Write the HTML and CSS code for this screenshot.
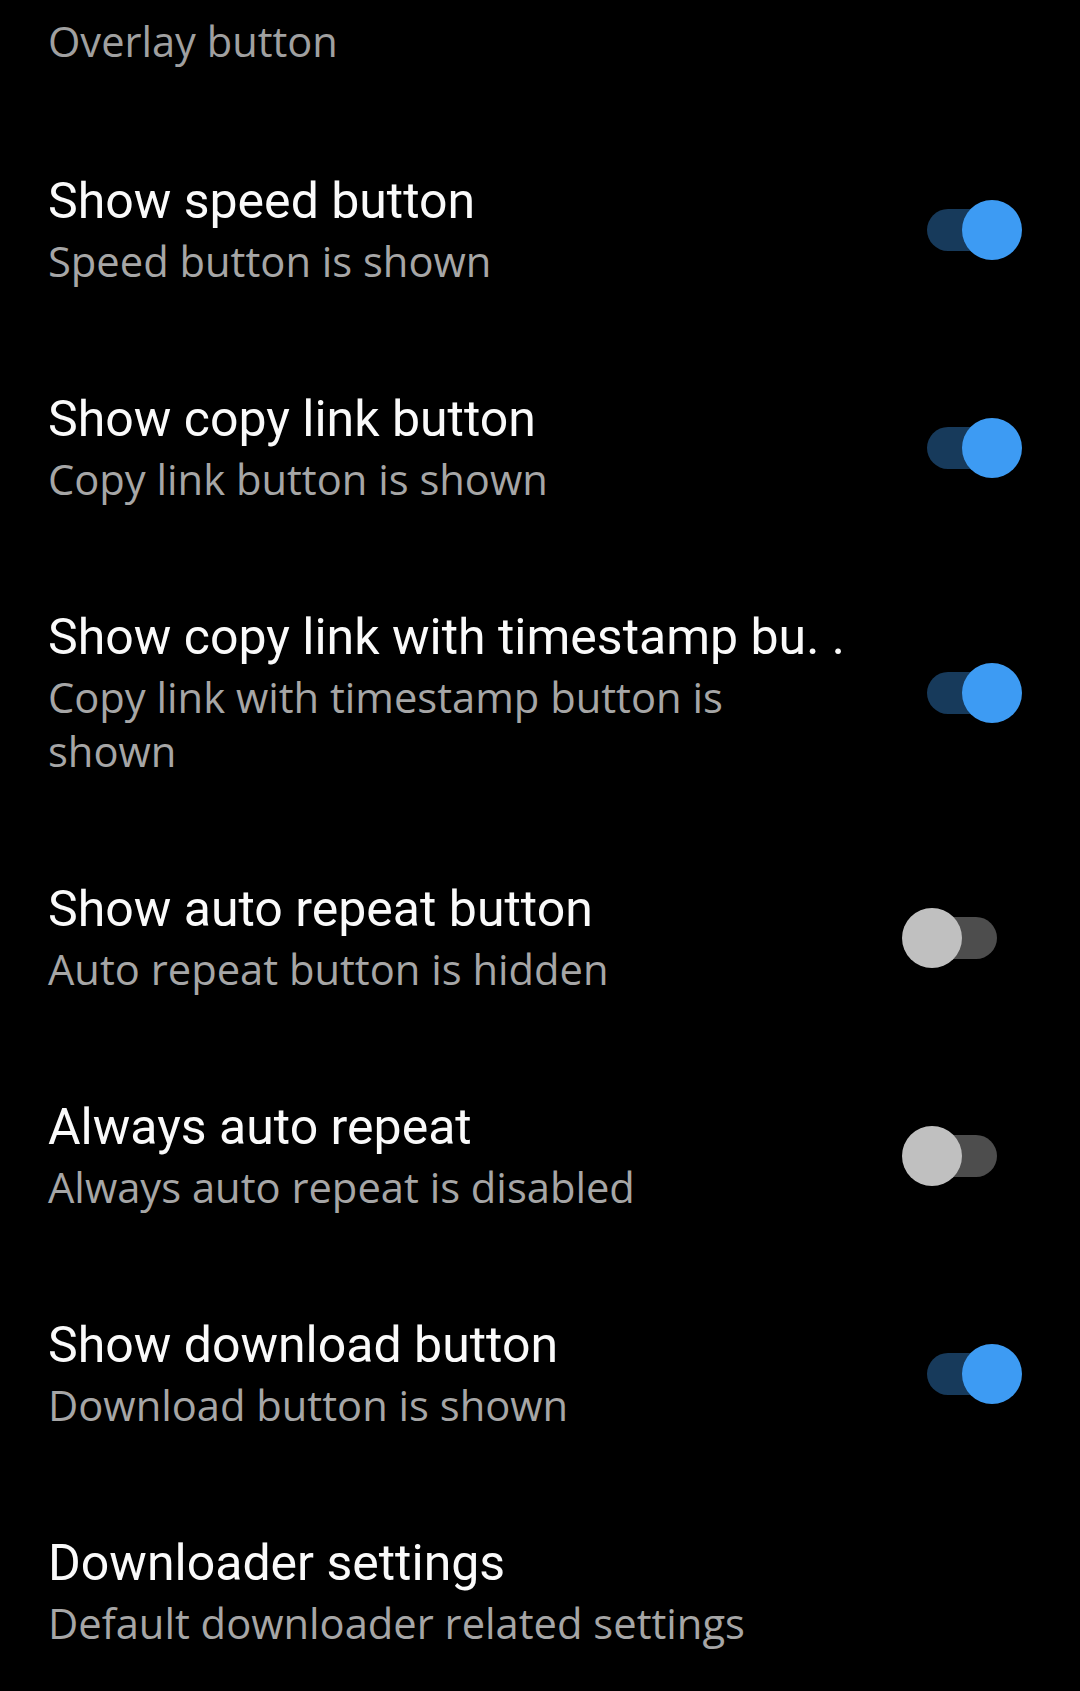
FILE: index.html
```html
<!DOCTYPE html>
<html lang="en">
<head>
<meta charset="utf-8">
<title>Overlay button settings</title>
<link rel="stylesheet" href="styles.css">
</head>
<body>
<main class="screen">
  <h2 class="section-header">Overlay button</h2>
  <ul class="pref-list">
    <li class="pref">
      <div class="pref-text">
        <div class="pref-title">Show speed button</div>
        <div class="pref-summary">Speed button is shown</div>
      </div>
      <span class="switch on"><span class="track"></span><span class="thumb"></span></span>
    </li>
    <li class="pref">
      <div class="pref-text">
        <div class="pref-title">Show copy link button</div>
        <div class="pref-summary">Copy link button is shown</div>
      </div>
      <span class="switch on"><span class="track"></span><span class="thumb"></span></span>
    </li>
    <li class="pref">
      <div class="pref-text">
        <div class="pref-title">Show copy link with timestamp bu. .</div>
        <div class="pref-summary">Copy link with timestamp button is shown</div>
      </div>
      <span class="switch on"><span class="track"></span><span class="thumb"></span></span>
    </li>
    <li class="pref">
      <div class="pref-text">
        <div class="pref-title">Show auto repeat button</div>
        <div class="pref-summary">Auto repeat button is hidden</div>
      </div>
      <span class="switch off"><span class="track"></span><span class="thumb"></span></span>
    </li>
    <li class="pref">
      <div class="pref-text">
        <div class="pref-title">Always auto repeat</div>
        <div class="pref-summary">Always auto repeat is disabled</div>
      </div>
      <span class="switch off"><span class="track"></span><span class="thumb"></span></span>
    </li>
    <li class="pref">
      <div class="pref-text">
        <div class="pref-title">Show download button</div>
        <div class="pref-summary">Download button is shown</div>
      </div>
      <span class="switch on"><span class="track"></span><span class="thumb"></span></span>
    </li>
    <li class="pref">
      <div class="pref-text">
        <div class="pref-title">Downloader settings</div>
        <div class="pref-summary">Default downloader related settings</div>
      </div>
    </li>
  </ul>
</main>
</body>
</html>
```
FILE: styles.css
```css
html, body {
  margin: 0;
  padding: 0;
  background: #000;
}

body {
  font-family: Roboto, "Noto Sans", "Liberation Sans", sans-serif;
  width: 1080px;
  height: 1691px;
  overflow: hidden;
}

.screen {
  display: flex;
  flex-direction: column;
}

.section-header {
  margin: 0;
  padding: 13px 48px 0;
  height: 119px;
  box-sizing: border-box;
  font-family: "Open Sans", "Noto Sans", sans-serif;
  font-size: 41.6px;
  line-height: 56px;
  font-weight: 400;
  color: #a0a0a0;
}

.pref-list {
  list-style: none;
  margin: 0;
  padding: 0;
}

.pref {
  display: flex;
  align-items: center;
  padding: 53.5px 58px 49.5px 48px;
  gap: 62px;
}

.pref-text {
  flex: 1;
  min-width: 0;
}

.pref-title {
  font-size: 50px;
  line-height: 57px;
  color: #fafafa;
  white-space: nowrap;
}

.pref-summary {
  margin-top: 4px;
  font-family: "Open Sans", "Noto Sans", sans-serif;
  font-size: 41.7px;
  line-height: 54px;
  color: #a6a6a6;
}

.switch {
  position: relative;
  flex: none;
  width: 120px;
  height: 60px;
}

.track {
  position: absolute;
  left: 25px;
  top: 9px;
  width: 70px;
  height: 42px;
  border-radius: 21px;
}

.thumb {
  position: absolute;
  top: 0;
  width: 60px;
  height: 60px;
  border-radius: 50%;
}

.switch.on .track { background: #173a5b; }
.switch.on .thumb { left: 60px; background: #3d9bf3; }

.switch.off .track { background: #4d4d4d; }
.switch.off .thumb { left: 0; background: #c0c0c0; }
```
